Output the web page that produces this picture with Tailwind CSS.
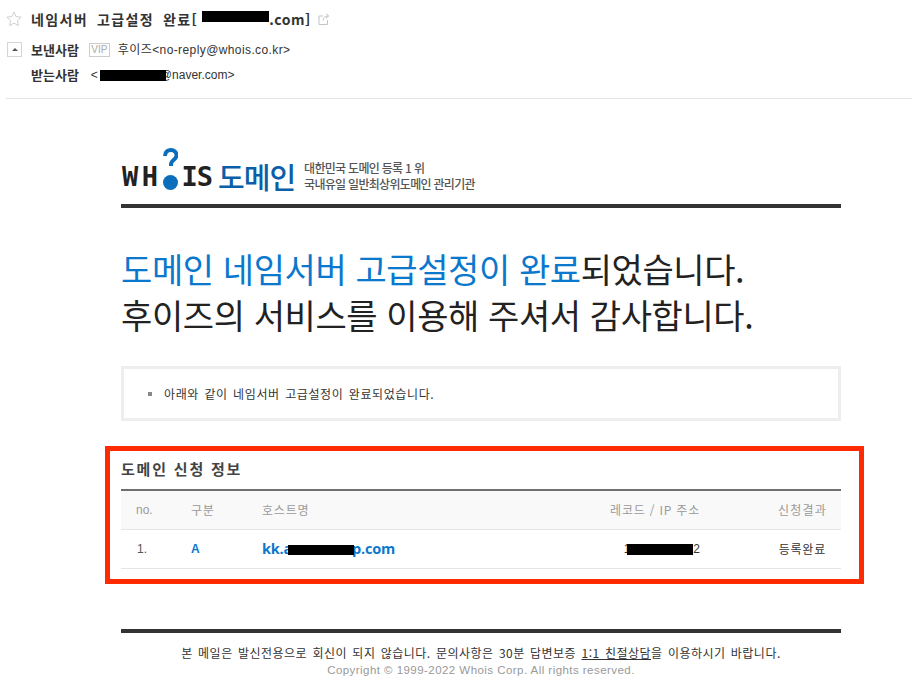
<!DOCTYPE html>
<html lang="ko"><head><meta charset="utf-8">
<script src="https://cdn.jsdelivr.net/npm/@tailwindcss/browser@4"></script>
</head>
<body class="bg-white overflow-hidden font-['Noto_Sans_CJK_KR','Noto_Sans',sans-serif] text-[#222]">
<div class="relative w-[912px] h-[692px] overflow-hidden">
  <header class="h-[99px] ml-[6px] border-b border-[#e5e5e5] flex flex-col">
    <div class="h-[37px] flex items-center pt-[1px]">
      <svg class="w-[16px] h-[16px]" viewBox="0 0 16 16" fill="none" stroke="#cfcfcf"><path d="M8 1l2.100 4.600 5 .6-3.700 3.400 1 5L8 12.100 3.600 14.600l1-5L.9 6.200l5-.6z"/></svg>
      <span class="ml-[9px] text-[14px] leading-[20px] font-bold tracking-[1.4px] [word-spacing:3.500px] text-[#333] whitespace-nowrap">네임서버 고급설정 완료[<span class="inline-block w-[71px]"></span><span class="tracking-[0.5px]">.com]</span></span>
      <svg class="ml-[7px] w-[12px] h-[12px]" viewBox="0 0 12 12" fill="none" stroke="#c4c4c4"><path d="M9.500 7v4.500h-8.500V3H5M5 7.500C5.500 4.500 7 3 10 3M8 .8 10.800 3 8 5.200"/></svg>
    </div>
    <div class="h-[25px] flex items-center text-[12px] whitespace-nowrap">
      <span class="w-[15px] h-[15px] ml-[1px] border border-[#d5d5d5] flex items-center justify-center"><span class="block w-0 h-0 border-x-[3px] border-x-transparent border-b-[3px] border-b-[#555]"></span></span>
      <b class="ml-[9px] text-[13px] text-[#333]">보낸사람</b>
      <span class="ml-[10px] w-[21px] h-[14px] border border-[#ccc] text-[#aaa] text-[10px] leading-[12px] text-center font-['Liberation_Sans']">VIP</span>
      <span class="ml-[8px] text-[#333] tracking-[0.4px] font-['Liberation_Sans','Noto_Sans_CJK_KR']">후이즈&lt;no-reply@whois.co.kr&gt;</span>
    </div>
    <div class="h-[25px] flex items-center text-[12px] whitespace-nowrap pl-[25px]">
      <b class="text-[13px] text-[#333]">받는사람</b>
      <span class="ml-[12px] text-[#333] font-['Liberation_Sans']">&lt;<span class="inline-block w-[62px]"></span>@naver.com&gt;</span>
    </div>
  </header>

  <main class="w-[720px] ml-[121px]">
    <div class="h-[109px] border-b-[4px] border-[#333] flex items-end pb-[12px]">
      <div class="flex items-end h-[46px]">
        <span class="font-['DejaVu_Sans_Mono'] font-bold text-[27px] leading-[30px] text-[#222] flex items-end whitespace-nowrap">
          <span class="tracking-[3.5px] ml-[1px]">WH</span><span class="relative w-[20px] h-[30px] block"><span class="absolute left-[1px] bottom-[2px] w-[15px] h-[15px] rounded-full bg-[#0a6ebd]"></span><svg class="absolute left-[1px] top-[-14px] w-[15px] h-[30px]" viewBox="0 0 15 30" fill="none" stroke="#0a6ebd" stroke-width="4"><path d="M2 8C2 3.500 5 2 8 2s5.500 2 5.500 5.500c0 4-5 4.500-5.500 8.500v2"/></svg></span><span class="tracking-[-1px]">IS</span>
        </span>
        <span class="ml-[6px] text-[#0a5fa8] text-[29px] leading-[32px] font-medium tracking-[-1px] whitespace-nowrap">도메인</span>
        <span class="ml-[9px] text-[#555] text-[12px] leading-[16px] tracking-[-0.7px] font-medium whitespace-nowrap">대한민국 도메인 등록 1 위<br>국내유일 일반최상위도메인 관리기관</span>
      </div>
    </div>

    <h1 class="mt-[38px] text-[34px] leading-[46px] font-normal tracking-[-0.4px] text-[#222] whitespace-nowrap font-['Noto_Sans_CJK_KR']"><span class="text-[#0a78cd]">도메인 네임서버 고급설정이 완료</span>되었습니다.<br>후이즈의 서비스를 이용해 주셔서 감사합니다.</h1>

    <div class="mt-[28px] h-[55px] border-[3px] border-[#eeeeee] flex items-center pl-[24px]">
      <span class="w-[4px] h-[4px] bg-[#888]"></span>
      <span class="ml-[12px] text-[12px] tracking-[0.6px] [word-spacing:1.5px] text-[#333] whitespace-nowrap">아래와 같이 네임서버 고급설정이 완료되었습니다.</span>
    </div>

    <h2 class="mt-[38px] h-[30px] text-[15px] leading-[20px] font-bold tracking-[1.800px] text-[#444]">도메인 신청 정보</h2>
    <div class="border-t-[2px] border-[#6f6f6f] grid grid-cols-[70px_71px_238px_200px_141px] text-[12px]">
      <div class="contents text-[#999]">
        <div class="h-[39px] bg-[#f9f9f9] border-b border-[#e5e5e5] pl-[15px] flex items-center font-['Liberation_Sans']">no.</div>
        <div class="h-[39px] bg-[#f9f9f9] border-b border-[#e5e5e5] flex items-center tracking-[0.8px]">구분</div>
        <div class="h-[39px] bg-[#f9f9f9] border-b border-[#e5e5e5] flex items-center tracking-[0.8px]">호스트명</div>
        <div class="h-[39px] bg-[#f9f9f9] border-b border-[#e5e5e5] flex items-center justify-end tracking-[0.8px] whitespace-nowrap">레코드 / IP 주소</div>
        <div class="h-[39px] bg-[#f9f9f9] border-b border-[#e5e5e5] flex items-center justify-end pr-[14px] tracking-[1.200px]">신청결과</div>
      </div>
      <div class="contents">
        <div class="h-[39px] border-b border-[#e5e5e5] pl-[16px] flex items-center text-[#555] font-['Liberation_Sans']">1.</div>
        <div class="h-[39px] border-b border-[#e5e5e5] flex items-center text-[#0a78cd] font-bold font-['Liberation_Sans']">A</div>
        <div class="h-[39px] border-b border-[#e5e5e5] flex items-center text-[#0a78cd] font-bold text-[14.500px] tracking-[-0.2px] font-['Open_Sans'] whitespace-nowrap">kk.a<span class="inline-block w-[60px]"></span>p.com</div>
        <div class="h-[39px] border-b border-[#e5e5e5] flex items-center justify-end text-[#333] font-['Liberation_Sans'] whitespace-nowrap">1<span class="inline-block w-[63px]"></span>2</div>
        <div class="h-[39px] border-b border-[#e5e5e5] flex items-center justify-end pr-[15px] tracking-[0.8px] text-[#333]">등록완료</div>
      </div>
    </div>

    <footer class="mt-[60px] border-t-[4px] border-[#333] pt-[11px] text-center whitespace-nowrap">
      <p class="text-[12px] leading-[17px] tracking-[0.48px] [word-spacing:1.5px] text-[#333]">본 메일은 발신전용으로 회신이 되지 않습니다. 문의사항은 30분 답변보증 <u>1:1 친절상담</u>을 이용하시기 바랍니다.</p>
      <p class="text-[11.500px] leading-[18px] text-[#999] tracking-[0.45px] font-['Liberation_Sans']">Copyright © 1999-2022 Whois Corp. All rights reserved.</p>
    </footer>
  </main>

  <div class="absolute left-[105px] top-[446px] w-[759px] h-[138px] border-[5px] border-[#ff2a00]"></div>
  <div class="absolute left-[202px] top-[11px] w-[67px] h-[11px] bg-black"></div>
  <div class="absolute left-[100px] top-[70px] w-[66px] h-[11px] bg-black"></div>
  <div class="absolute left-[288px] top-[545px] w-[66px] h-[10px] bg-black"></div>
  <div class="absolute left-[627px] top-[544px] w-[66px] h-[11px] bg-black"></div>
</div>
</body></html>
